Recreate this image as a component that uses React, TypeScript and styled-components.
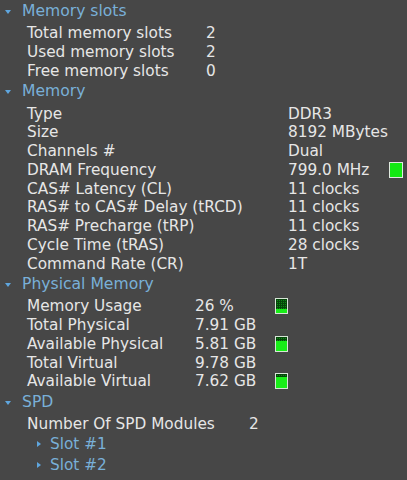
import React from 'react';
import styled, { createGlobalStyle } from 'styled-components';

const GlobalStyle = createGlobalStyle`
  html, body {
    margin: 0;
    padding: 0;
    background: #474747;
  }
  body {
    font-family: 'DejaVu Sans', Verdana, sans-serif;
    font-size: 15.3px;
    color: #e6e6e6;
  }
`;

const Tree = styled.div`
  display: flex;
  flex-direction: column;
  width: 407px;
  height: 480px;
  overflow: hidden;
`;

const SectionHeader = styled.div`
  display: flex;
  align-items: center;
  height: 24px;
  padding-bottom: 2px;
  box-sizing: border-box;
  color: #79b0d8;
  font-size: 15.6px;
`;

const Arrow = styled.span<{ $open?: boolean }>`
  display: inline-block;
  width: 0;
  height: 0;
  margin: ${({ $open }) => ($open ? '2px 11px 0 5px' : '0 9px 0 0')};
  border-style: solid;
  ${({ $open }) =>
    $open
      ? 'border-width: 4px 3.5px 0 3.5px; border-color: #5fa6de transparent transparent transparent;'
      : 'border-width: 3.5px 0 3.5px 4px; border-color: transparent transparent transparent #5fa6de;'}
`;

const Rows = styled.div<{ $labelWidth: number; $valueWidth?: number }>`
  display: grid;
  grid-template-columns: ${({ $labelWidth, $valueWidth }) =>
    $valueWidth ? `${$labelWidth}px ${$valueWidth}px auto` : `${$labelWidth}px auto`};
  grid-auto-rows: 18.75px;
  align-items: center;
  padding-left: 27px;
  white-space: nowrap;
`;

const Cell = styled.span`
  line-height: 18px;
`;

const ValueCell = styled.span`
  display: flex;
  align-items: center;
  line-height: 18px;
`;

const Meter = styled.span<{ $fill: number }>`
  display: inline-block;
  width: 11px;
  height: 14px;
  border: 1.5px solid #d6e6d6;
  background:
    linear-gradient(to top, #18ee18 ${({ $fill }) => $fill}%, transparent ${({ $fill }) => $fill}%),
    repeating-linear-gradient(to right, #06460b 0 1px, transparent 1px 2px),
    repeating-linear-gradient(to bottom, #06460b 0 1px, #0d8a15 1px 2px);
`;

const FreqMeter = styled.span`
  display: inline-block;
  width: 12px;
  height: 14px;
  margin-left: auto;
  border: 1.5px solid #dfe9df;
  background: #12ea12;
`;

const SubItem = styled.div`
  display: flex;
  align-items: center;
  height: 21px;
  padding-left: 37px;
  color: #79b0d8;
`;

const memorySlots = [
  ['Total memory slots', '2'],
  ['Used memory slots', '2'],
  ['Free memory slots', '0'],
];

const memory = [
  ['Type', 'DDR3'],
  ['Size', '8192 MBytes'],
  ['Channels #', 'Dual'],
  ['DRAM Frequency', '799.0 MHz'],
  ['CAS# Latency (CL)', '11 clocks'],
  ['RAS# to CAS# Delay (tRCD)', '11 clocks'],
  ['RAS# Precharge (tRP)', '11 clocks'],
  ['Cycle Time (tRAS)', '28 clocks'],
  ['Command Rate (CR)', '1T'],
];

const physical: [string, string, number | null][] = [
  ['Memory Usage', '26 %', 32],
  ['Total Physical', '7.91 GB', null],
  ['Available Physical', '5.81 GB', 72],
  ['Total Virtual', '9.78 GB', null],
  ['Available Virtual', '7.62 GB', 76],
];

const App: React.FC = () => {
  return (
    <>
      <GlobalStyle />
      <Tree>
        <SectionHeader>
          <Arrow $open />
          Memory slots
        </SectionHeader>
        <Rows $labelWidth={179}>
          {memorySlots.map(([label, value]) => (
            <React.Fragment key={label}>
              <Cell>{label}</Cell>
              <Cell>{value}</Cell>
            </React.Fragment>
          ))}
        </Rows>

        <SectionHeader>
          <Arrow $open />
          Memory
        </SectionHeader>
        <Rows $labelWidth={261} $valueWidth={115}>
          {memory.map(([label, value]) => (
            <React.Fragment key={label}>
              <Cell>{label}</Cell>
              <ValueCell>
                {value}
                {label === 'DRAM Frequency' && <FreqMeter />}
              </ValueCell>
              <span />
            </React.Fragment>
          ))}
        </Rows>

        <SectionHeader>
          <Arrow $open />
          Physical Memory
        </SectionHeader>
        <Rows $labelWidth={168} $valueWidth={80}>
          {physical.map(([label, value, fill]) => (
            <React.Fragment key={label}>
              <Cell>{label}</Cell>
              <Cell>{value}</Cell>
              <ValueCell>{fill !== null && <Meter $fill={fill} />}</ValueCell>
            </React.Fragment>
          ))}
        </Rows>

        <SectionHeader>
          <Arrow $open />
          SPD
        </SectionHeader>
        <Rows $labelWidth={222}>
          <Cell>Number Of SPD Modules</Cell>
          <Cell>2</Cell>
        </Rows>
        <SubItem>
          <Arrow />
          Slot #1
        </SubItem>
        <SubItem>
          <Arrow />
          Slot #2
        </SubItem>
      </Tree>
    </>
  );
};

export default App;
